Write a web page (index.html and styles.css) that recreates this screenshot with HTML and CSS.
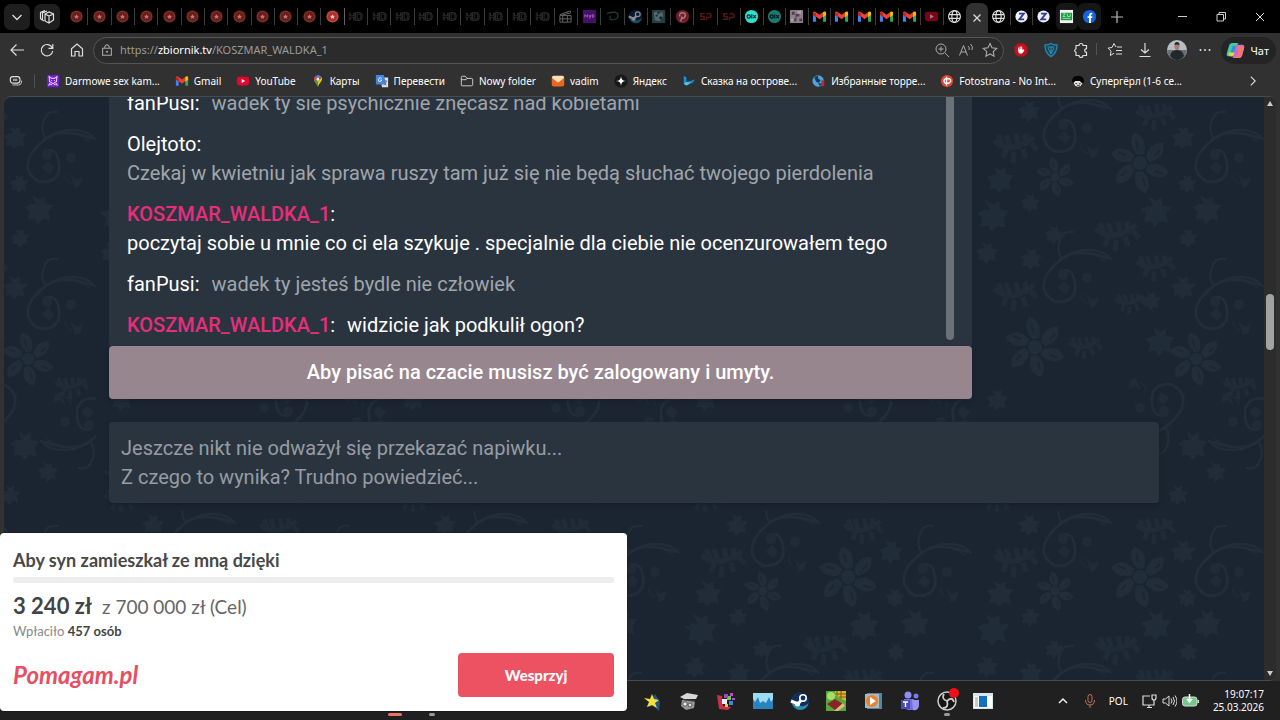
FILE: index.html
```html
<!DOCTYPE html>
<html lang="pl">
<head>
<meta charset="utf-8">
<meta name="viewport" content="width=device-width, initial-scale=1">
<title>KOSZMAR_WALDKA_1</title>
<link rel="stylesheet" href="styles.css">
</head>
<body>
<svg class="defs" aria-hidden="true">
  <symbol id="star-tab" viewBox="0 0 16 16"><circle cx="8" cy="8" r="6.500" fill="#74351a"/><circle cx="8" cy="8" r="4.800" fill="#6f1a22"/><path d="M8 5.500l.8 1.700 1.900.2-1.400 1.200.4 1.900L8 9.500l-1.700 1 .4-1.900-1.400-1.200 1.900-.2z" fill="#b08078"/></symbol>
  <symbol id="hd" viewBox="0 0 16 16"><path d="M2 4v8M6.500 4v8M2 8h4.500M9 4.500h2.500q3 0 3 3.500t-3 3.500H9z" fill="none" stroke="#3b3b3b" stroke-width="2.200"/><path d="M2 4v8M6.500 4v8M2 8h4.500M9 4.500h2.500q3 0 3 3.500t-3 3.500H9z" fill="none" stroke="#0a0a0a"/></symbol>
  <symbol id="gmail" viewBox="0 0 16 16"><path d="M1 4.500V13.500h3.200V8z" fill="#4285f4"/><path d="M15 4.500V13.500h-3.200V8z" fill="#34a853"/><path d="M1 4.500q0-2.500 2.500-1.700L8 6.200l4.500-3.400v4.700L8 11 3 7z" fill="#ea4335"/><path d="M1 4v2.500l3.200 2.400V4z" fill="#c5221f"/><path d="M15 4v2.500l-3.200 2.400V3.500l.7-.7Q15 2 15 4z" fill="#fbbc04"/></symbol>
  <symbol id="youtube" viewBox="0 0 16 16"><rect x="1" y="3" width="14" height="10" rx="2.800" fill="#e5052f"/><path d="M6.500 5.600v4.800l4-2.400z" fill="#fff"/></symbol>
  <symbol id="globe" viewBox="0 0 16 16"><g fill="none" stroke="#ddd" stroke-width="1.200"><circle cx="8" cy="8" r="6.300"/><ellipse cx="8" cy="8" rx="2.800" ry="6.300"/><path d="M2 6h12M2 10h12"/></g></symbol>
  <symbol id="zed" viewBox="0 0 16 16"><circle cx="8" cy="8" r="6.500" fill="#f0f1fa"/><path d="M5.300 5h5.200L5.600 11h5.200" fill="none" stroke="#313f91" stroke-width="1.900"/></symbol>
  <symbol id="five" viewBox="0 0 16 16"><path d="M7 5H3v3h3.500v3H2M9 5h3q2 0 2 2t-2 2H9v3" fill="none" stroke="#53171a" stroke-width="1.600"/></symbol>
  <symbol id="steam" viewBox="0 0 20 20"><circle cx="10" cy="10" r="9" fill="#10305a"/><path d="M1.500 12Q4 18.500 10 19q7 0 8.800-7-5 4-8 3z" fill="#2c8cba"/><path d="M1 10l7 3 5-6" fill="none" stroke="#fff" stroke-width="3"/><circle cx="13" cy="7" r="3.200" fill="#10305a" stroke="#fff" stroke-width="1.600"/><circle cx="7.500" cy="13" r="2.500" fill="#fff"/></symbol>
  <symbol id="olx" viewBox="0 0 16 16"><circle cx="8" cy="8" r="7" fill="#32dfca"/><circle cx="5" cy="8" r="1.700" fill="none" stroke="#012f34" stroke-width="1.400"/><path d="M8.300 5.500v4.700M9.900 6.500l2.800 3.200M12.700 6.500L9.900 9.700" stroke="#012f34" stroke-width="1.300"/></symbol>
  <symbol id="swirl" viewBox="-50 -55 110 90" overflow="visible"><g fill="none" stroke="#212d39" stroke-linecap="round"><path d="M-4-12Q6-15 9-5 14 14 0 18-15 22-21 6-23-8-7-21 8-37 42-25" stroke-width="2.500"/><path d="M-15-13Q2-32 20-33t26 9M-3-24Q-9-32-5-43q3-10 13-8" stroke-width="2"/><path d="M13-30q14-2 27 8M16 12q0 6 6 8"/></g><g fill="#202b37"><circle cx="-2" cy="-8" r="5"/><path d="M-7 5l6-7 6 6-4 7zM22 12l5 5 7-3-3 9-5 2z"/><circle cx="22" cy="-5" r="5"/></g></symbol>
  <symbol id="flower" viewBox="-34 -34 68 68" overflow="visible"><g fill="#212d38"><circle r="7"/><path id="petal" d="M-2-8Q-13-18-6-30 8-26 4-9z"/><use href="#petal" transform="rotate(60)"/><use href="#petal" transform="rotate(120)"/><use href="#petal" transform="rotate(180)"/><use href="#petal" transform="rotate(240)"/><use href="#petal" transform="rotate(300)"/></g><g stroke="#1b2632" stroke-width="2"><path d="M-2-15l-2-8M15-8l5-5M15 8l8 3M3 15l2 8M-14 8l-5 5M-14-8l-8-3"/></g></symbol>
  <symbol id="bloom" viewBox="-18 -18 36 36" overflow="visible"><path d="M-3-6L-7-15 0-11 6-14 6-6 15-5 10 2 12 11 4 9-1 15-5 9-12 10-10 2-15-3-8-6z" fill="#202c37"/></symbol>
  <symbol id="fern" viewBox="-24 -18 48 36" overflow="visible"><path d="M-22-6q15 15 40-4M-13-1l-5-11M-5 3l-5-15M3 2L0-13M10-1l-1-12M-10 3l-3 8M-2 5l-1 11M7 2l3 9M15-4l6 7" fill="none" stroke="#1f2b36" stroke-width="5"/></symbol>
  <symbol id="ext" viewBox="0 0 16 16"><path d="M3 3.500h3a2 2 0 014 0h3.500v3.200a1.800 1.800 0 100 3.600v3.200H10a2 2 0 01-4 0H3v-3.200a1.900 1.900 0 010-3.600z" fill="none" stroke="#ddd" stroke-width="1.200"/></symbol>
</svg>

<header class="browser">
  <div class="tabstrip">
    <div class="tab-tools">
      <button class="square" aria-label="Karty"><svg viewBox="0 0 16 16"><path d="M3.500 6L8 10.500 12.500 6" fill="none" stroke="#ddd" stroke-width="1.300"/></svg></button>
      <button class="square" aria-label="Obszary"><svg viewBox="0 0 16 16"><g fill="none" stroke="#ddd" stroke-width="1.200"><path d="M6 5l4-2 4.500 2v6L10 14l-4-2zM6 5l4 2 4.500-2M10 7v7M8 2L3.500 4v7L5 12M6 1.500L1.500 3.500v6L3 11"/></g></svg></button>
    </div>
    <ul class="tabs tabs-old">
      <li><svg><use href="#star-tab"/></svg></li><li><svg><use href="#star-tab"/></svg></li><li><svg><use href="#star-tab"/></svg></li><li><svg><use href="#star-tab"/></svg></li><li><svg><use href="#star-tab"/></svg></li><li><svg><use href="#star-tab"/></svg></li><li><svg><use href="#star-tab"/></svg></li><li><svg><use href="#star-tab"/></svg></li><li><svg><use href="#star-tab"/></svg></li><li><svg><use href="#star-tab"/></svg></li><li><svg><use href="#star-tab"/></svg></li><li class="bright"><svg><use href="#star-tab"/></svg></li>
      <li><svg><use href="#hd"/></svg></li><li><svg><use href="#hd"/></svg></li><li><svg><use href="#hd"/></svg></li><li><svg><use href="#hd"/></svg></li><li><svg><use href="#hd"/></svg></li><li><svg><use href="#hd"/></svg></li><li><svg><use href="#hd"/></svg></li><li><svg><use href="#hd"/></svg></li><li><svg><use href="#hd"/></svg></li>
      <li><svg viewBox="0 0 16 16"><path d="M2 7h12v7H2zM2 10.500h12M5 14v-7M10 14V7M2 6l11-4 .7 2L3 7M5 5l2 1M9 3.500l2 1" fill="none" stroke="#666"/></svg></li>
      <li><svg viewBox="0 0 16 16"><rect x="1" y="1" width="14" height="14" fill="#46106a"/><path d="M3 9V6l1.500 2L6 6v3M7.500 6.500l1 2 1-2-1.500 4M11 6v3h1q2-1.500 0-3z" fill="none" stroke="#a35ab0"/></svg></li>
      <li><svg viewBox="0 0 16 16"><path d="M2 5q12-4 12 2.500 0 5-9 3.500M5.500 7v4" fill="none" stroke="#173c37" stroke-width="1.400"/></svg></li>
      <li class="dim"><svg><use href="#steam"/></svg></li>
      <li><svg viewBox="0 0 16 16"><path d="M1 1h14v14H1z" fill="#263f43"/><path d="M3 4l3-2 1 4 5-3 1 5-4 5-5-1z" fill="#536b6d"/><path d="M5 6h2v2H5zm4 2h3v3H9z" fill="#182c32"/></svg></li>
      <li><svg viewBox="0 0 16 16"><circle cx="8" cy="8" r="7" fill="#712029"/><path d="M7.500 8L6 13.500M5 8q-.5-4 3-4t3 3-4 3" fill="none" stroke="#a9797d" stroke-width="1.500"/></svg></li>
      <li><svg><use href="#five"/></svg></li><li><svg><use href="#five"/></svg></li>
    </ul>
    <ul class="tabs tabs-mid">
      <li><svg><use href="#olx"/></svg></li><li class="dim"><svg><use href="#olx"/></svg></li>
      <li><svg viewBox="0 0 16 16"><rect x="1" y="1" width="14" height="14" rx="1" fill="#8a828b"/><path d="M3 3h3v3H3zM7 5h4v3H8v5H5v-3h2zM11 10h3v3h-3z" fill="#513e52"/><path d="M9 2h4v3H9zM2 10h3v3H2z" fill="#c598a9"/></svg></li>
      <li><svg><use href="#gmail"/></svg></li><li><svg><use href="#gmail"/></svg></li><li><svg><use href="#gmail"/></svg></li><li><svg><use href="#gmail"/></svg></li><li><svg><use href="#gmail"/></svg></li>
      <li class="dim"><svg><use href="#youtube"/></svg></li><li class="last"><svg><use href="#globe"/></svg></li>
    </ul>
    <button class="active-tab" aria-label="Zamknij kartę"><svg viewBox="0 0 16 16"><path d="M4.500 4.500l7 7M11.500 4.500l-7 7" stroke="#ddd" stroke-width="1.200"/></svg></button>
    <ul class="tabs tabs-new">
      <li><svg><use href="#globe"/></svg></li><li><svg><use href="#zed"/></svg></li><li class="last"><svg><use href="#zed"/></svg></li>
      <li class="raised"><svg viewBox="0 0 16 16"><path d="M1 1h14v14H1z" fill="#f4f5f0"/><path d="M2 4h12v8H2z" fill="#1d9b48"/><path d="M4 5l3 .2L4 8h3M9 5v3h3V5M4 10h8" fill="none" stroke="#9bdaac"/></svg></li>
      <li class="raised"><svg viewBox="0 0 16 16"><circle cx="8" cy="8" r="7" fill="#1264df"/><path d="M8.500 15V7q0-2.500 2.500-2M6 8.700h5" fill="none" stroke="#fff" stroke-width="2"/></svg></li>
    </ul>
    <button class="plain add" aria-label="Nowa karta"><svg viewBox="0 0 16 16"><path d="M8 2v12M2 8h12" stroke="#bbb" stroke-width="1.200"/></svg></button>
    <div class="window-buttons">
      <button class="plain" aria-label="Minimalizuj"><svg viewBox="0 0 16 16"><path d="M4 7.500h9" stroke="#ccc"/></svg></button>
      <button class="plain" aria-label="Przywróć"><svg viewBox="0 0 16 16"><path d="M4 5.500h6.500V12H4zM6 5V3.500h6.500V10H11" fill="none" stroke="#ccc"/></svg></button>
      <button class="plain" aria-label="Zamknij"><svg viewBox="0 0 16 16"><path d="M4 4l8 8M12 4l-8 8" stroke="#ddd"/></svg></button>
    </div>
  </div>

  <div class="toolbar">
    <nav class="nav-buttons">
      <button class="plain" aria-label="Wstecz"><svg viewBox="0 0 16 16"><path d="M15 8H2M7.500 2.500L2 8l5.500 5.500" fill="none" stroke="#ddd" stroke-width="1.200"/></svg></button>
      <button class="plain" aria-label="Odśwież"><svg viewBox="0 0 16 16"><path d="M13.300 6A5.700 5.700 0 1013.700 9M13.800 2v4.300H9.500" fill="none" stroke="#ddd" stroke-width="1.200"/></svg></button>
      <button class="plain" aria-label="Strona główna"><svg viewBox="0 0 16 16"><path d="M2.500 6.800L8 2l5.500 4.800V14H10V9.500H6V14H2.500z" fill="none" stroke="#ddd" stroke-width="1.200"/></svg></button>
    </nav>
    <div class="address">
      <svg viewBox="0 0 16 16"><path d="M3 6h10v8H3zM5.500 6V4q2.500-4 5 0v2" fill="none" stroke="#aaa" stroke-width="1.200"/><circle cx="8" cy="10" r="1.200" fill="#aaa"/></svg>
      <a href="#chat" class="url">https://<b>zbiornik.tv</b>/KOSZMAR_WALDKA_1</a>
      <div class="address-tools">
        <button class="plain" aria-label="Powiększenie"><svg viewBox="0 0 16 16"><circle cx="7" cy="7" r="5" fill="none" stroke="#aaa"/><path d="M11 11l4 4M4.500 7h5M7 4.500v5" stroke="#aaa"/></svg></button>
        <button class="plain" aria-label="Czytaj na głos"><svg viewBox="0 0 16 16"><path d="M1.500 13.500L5.500 3.500l4 10M3 10h5M10 4q2 1.500 1 4M12.500 2q3 2.500 1.500 6" fill="none" stroke="#aaa"/></svg></button>
        <button class="plain" aria-label="Ulubione"><svg viewBox="0 0 16 16"><path d="M8 1.500l2 4.300 4.700.6-3.500 3.200.9 4.700L8 12l-4.100 2.300.9-4.700L1.300 6.400 6 5.800z" fill="none" stroke="#aaa" stroke-width="1.100"/></svg></button>
      </div>
    </div>
    <div class="extensions">
      <button class="plain" aria-label="Blokada reklam"><svg viewBox="0 0 16 16"><path d="M5 1.500h6L14.500 5v6L11 14.500H5L1.500 11V5z" fill="#c80f1e"/><path d="M5.700 8V5.500M7.200 8V4.500M8.700 8V4.500M5.700 8l.5 3h3l1.800-3h-1z" fill="#fff" stroke="#fff"/></svg></button>
      <button class="plain" aria-label="Ochrona"><svg viewBox="0 0 16 16"><path d="M2 3q4 0 6-1.500Q10 3 14 3q0 8-6 11.500Q2 11 2 3z" fill="#173f56" stroke="#2784ad" stroke-width="1.500"/><path d="M4.500 5h7M8 5v6M5 6l3 6 3-6" fill="none" stroke="#3395bc"/></svg></button>
      <button class="plain" aria-label="Rozszerzenia"><svg><use href="#ext"/></svg></button>
      <button class="plain split" aria-label="Lista ulubionych"><svg viewBox="0 0 16 16"><path d="M9 5L7 1.500 5 5.500l-4 .6 3 3-.7 4.400L7 11.300M10 5h5M9 8.500h6M9 12h6" fill="none" stroke="#ddd"/></svg></button>
      <button class="plain" aria-label="Pobrane"><svg viewBox="0 0 16 16"><path d="M8 1v10M4 7.500L8 11l4-3.500M2.500 14.500h11" fill="none" stroke="#ddd" stroke-width="1.200"/></svg></button>
      <button class="plain" aria-label="Profil"><svg class="avatar" viewBox="0 0 20 20"><circle cx="10" cy="10" r="10" fill="#b7bec2"/><path d="M0 10h20q-1 9-10 10Q1 19 0 10z" fill="#687176"/><path d="M3 16q1-6 7-6t7 6q-3 4-7 4t-7-4z" fill="#21272d"/><ellipse cx="10" cy="6.500" rx="2.500" ry="3.500" fill="#a57f70"/><path d="M7.500 5q0-3 2.500-3t2.500 3q-2-1-5 0z" fill="#272624"/></svg></button>
      <button class="plain" aria-label="Więcej"><svg viewBox="0 0 16 16"><g fill="#ddd"><circle cx="3.500" cy="8" r="1"/><circle cx="8" cy="8" r="1"/><circle cx="12.500" cy="8" r="1"/></g></svg></button>
    </div>
    <button class="copilot"><svg viewBox="0 0 20 20"><path d="M7 2h6l-3 12q-.5 2-3 2H3q-3 0-2-3l2-8q1-3 4-3z" fill="#2d91d3"/><path d="M4 4q1-2 3-2h5l-1 3H7L4 16H3q-3 0-2-3z" fill="#43cba0"/><path d="M13 18H7l3-12q.5-2 3-2h4q3 0 2 3l-2 8q-1 3-4 3z" fill="#c568d9"/><path d="M12 5h5q3 0 2 3l-2 7q-1 3-4 3H9l1-3h3z" fill="#ee7774"/><path d="M3 12h6l-1 3q-1 2-3 1-3-1-2-4z" fill="#e3d541"/></svg>Чат</button>
  </div>

  <nav class="bookmarks">
    <a href="#apps" class="apps" aria-label="Karty"><svg viewBox="0 0 16 16"><rect x="1.500" y="3" width="11" height="7.500" rx="3" fill="none" stroke="#ddd" stroke-width="1.300"/><path d="M4.500 5.500h5v2.500h-5z" fill="#999"/><path d="M4 12.500h7q3.500 0 3.500-5" fill="none" stroke="#ddd"/></svg></a>
    <a href="#b1"><svg viewBox="0 0 16 16"><rect x="1" y="1" width="14" height="14" rx="2" fill="#6e1cd2"/><path d="M4 7.500L3.500 3l3 2h3l3-2-.5 4.500v1L8 11 4 8.500zM3 13.500l1-2.500 3 1.500M13 13.500L12 11l-3 1.500M6 7.500h1M9 7.500h1" fill="none" stroke="#e6cfff" stroke-width="1.200"/></svg>Darmowe sex kam...</a>
    <a href="#b2"><svg><use href="#gmail"/></svg>Gmail</a>
    <a href="#b3"><svg><use href="#youtube"/></svg>YouTube</a>
    <a href="#b4"><svg viewBox="0 0 16 16"><path d="M8 15Q6 11 4.500 9 3 6 4.500 3.500L8 6l3.500 2.500Q9 11 8 15z" fill="#34a853"/><path d="M4.500 3.500Q8-1 11.500 3L8 6 3.700 8Q3 5 4.500 3.500z" fill="#4285f4"/><path d="M11 2.500q3 3 .5 6L8 13V9l3-4z" fill="#fbbc04"/><path d="M3.500 6Q4 3 6 2l2 4-4 3z" fill="#ea4335"/><circle cx="8" cy="6" r="1.600" fill="#fff"/></svg>Карты</a>
    <a href="#b5"><svg viewBox="0 0 16 16"><path d="M6 4h9v11H8z" fill="#dce2e9"/><path d="M1 1h9l3 11H2q-1 0-1-1z" fill="#4486e4"/><path d="M7.500 5Q6 3.500 4.500 5t0 3.500q2 1 3.300-1.500H6" fill="none" stroke="#fff"/><path d="M9 8h5M11.500 7v1M13 8q-1 4-3 5M10 10l3 3" fill="none" stroke="#697789"/></svg>Перевести</a>
    <a href="#b6"><svg viewBox="0 0 16 16"><path d="M1.500 13V4q0-1.500 1.500-1.500h3L8 5h5q1.500 0 1.500 1.500V12q0 1.500-1.500 1.500H2zM1.500 6.500H7L8 5" fill="none" stroke="#ddd"/></svg>Nowy folder</a>
    <a href="#b7"><svg viewBox="0 0 16 16"><rect x="1" y="3" width="14" height="11" rx="2" fill="#f59624"/><path d="M1 4l7 6 7-6q0-2-2-2H3Q1 2 1 4z" fill="#f5dfbd"/><path d="M1 5v7q0 2 2 2h10q2 0 2-2V5L8 10z" fill="#ee6420"/></svg>vadim</a>
    <a href="#b8"><svg viewBox="0 0 16 16"><circle cx="8" cy="8" r="7.500" fill="#171717"/><path d="M8 2q0 6 6 6-6 0-6 6 0-6-6-6 6 0 6-6z" fill="#fff"/></svg>Яндекс</a>
    <a href="#b9"><svg viewBox="0 0 16 16"><path d="M2 2l3 2v5l5-1 5-2-3 4-7 3-3-2z" fill="#1392de"/><path d="M5 9l5 1-5 3-3-2z" fill="#55c7ee"/></svg>Сказка на острове...</a>
    <a href="#b10"><svg viewBox="0 0 16 16"><circle cx="7" cy="8" r="6.500" fill="#4fa3db"/><path d="M3 3l4-1v3l3 2-2 3-3-1-2-4zM7 10l4 1-2 3z" fill="#16395b"/><path d="M11 7h3v7h-4z" fill="#ba2938"/></svg>Избранные торре...</a>
    <a href="#b11"><svg viewBox="0 0 16 16"><circle cx="8" cy="8" r="7" fill="#e84330"/><path d="M7.500 3v10M7.500 5.500H6q-3 2 0 5h4q4-2 1-5H7" fill="none" stroke="#fff" stroke-width="1.600"/></svg>Fotostrana - No Int...</a>
    <a href="#b12"><svg viewBox="0 0 16 16"><ellipse cx="8" cy="9" rx="5" ry="5.500" fill="#e7e2de"/><path d="M1 9q0-7 7-7t7 7v1H12l-2-2H5l-2 2z" fill="#050505"/><path d="M5 11h2M9 11h2M7 13h3" stroke="#222"/></svg>Супергёрл (1-6 се...</a>
    <button class="plain more" aria-label="Więcej zakładek"><svg viewBox="0 0 16 16"><path d="M5.500 3L10.500 8l-5 5" fill="none" stroke="#ddd" stroke-width="1.300"/></svg></button>
  </nav>
</header>

<div class="frame">
  <svg class="wallpaper" aria-hidden="true" width="100%" height="100%">
    <defs><pattern id="floral" x="92" y="0" width="292" height="414" patternUnits="userSpaceOnUse">
      <g><use href="#swirl" x="43" y="-19" width="110" height="90"/><use href="#swirl" x="43" y="131" width="110" height="90"/><use href="#swirl" x="195" y="11" width="110" height="90"/><use href="#swirl" x="-97" y="11" width="110" height="90"/><use href="#swirl" x="195" y="158" width="110" height="90"/><use href="#swirl" x="-97" y="158" width="110" height="90"/></g>
      <g transform="translate(190 306) scale(-1 -1)"><use href="#swirl" x="-50" y="-55" width="110" height="90"/></g>
      <g transform="translate(55 350) scale(-1 -1)"><use href="#swirl" x="-50" y="-55" width="110" height="90"/></g>
      <g transform="translate(283 320) scale(-1 -1)"><use href="#swirl" x="-50" y="-55" width="110" height="90"/></g>
      <use href="#flower" x="134" y="32" width="68" height="68"/><use href="#flower" x="29" y="216" width="68" height="68"/><use href="#flower" x="194" y="232" width="60" height="60"/><use href="#flower" x="61" y="58" width="44" height="44"/>
      <g><use href="#bloom" x="12" y="67" width="32" height="32"/><use href="#bloom" x="2" y="100" width="38" height="38"/><use href="#bloom" x="166" y="97" width="36" height="36"/><use href="#bloom" x="218" y="96" width="34" height="34"/><use href="#bloom" x="197" y="27" width="28" height="28"/><use href="#bloom" x="44" y="1" width="26" height="26"/><use href="#bloom" x="204" y="76" width="22" height="22"/><use href="#bloom" x="47" y="95" width="22" height="22"/><use href="#bloom" x="2" y="143" width="26" height="26"/><use href="#bloom" x="46" y="149" width="26" height="26"/><use href="#bloom" x="197" y="177" width="28" height="28"/><use href="#bloom" x="171" y="228" width="34" height="34"/><use href="#bloom" x="168" y="193" width="22" height="22"/><use href="#bloom" x="204" y="332" width="34" height="34"/><use href="#bloom" x="232" y="363" width="24" height="24"/><use href="#bloom" x="194" y="386" width="24" height="24"/><use href="#bloom" x="12" y="290" width="26" height="26"/><use href="#bloom" x="71" y="127" width="22" height="22"/><use href="#bloom" x="205" y="130" width="22" height="22"/></g>
      <g><use href="#fern" x="20" y="32" width="48" height="36"/><use href="#fern" x="162" y="3" width="44" height="32"/><use href="#fern" x="122" y="120" width="48" height="36"/><use href="#fern" x="20" y="180" width="48" height="36"/><use href="#fern" x="162" y="154" width="44" height="32"/><use href="#fern" x="96" y="232" width="36" height="36"/><use href="#fern" x="250" y="272" width="36" height="36"/><use href="#fern" x="142" y="188" width="34" height="36"/><use href="#fern" x="5" y="388" width="44" height="30"/></g>
    </pattern></defs>
    <rect width="100%" height="100%" fill="url(#floral)"/>
  </svg>
  <main class="content">
    <section class="chat" id="chat">
      <div class="chat-body">
        <div class="messages">
          <p><span class="who">fanPusi:</span> <span class="muted">wadek ty sie psychicznie znęcasz nad kobietami</span></p>
          <p><span class="who">Olejtoto:</span><br><span class="muted">Czekaj w kwietniu jak sprawa ruszy tam już się nie będą słuchać twojego pierdolenia</span></p>
          <p><span class="who"><em>KOSZMAR_WALDKA_1</em>:</span><br>poczytaj sobie u mnie co ci ela szykuje . specjalnie dla ciebie nie ocenzurowałem tego</p>
          <p><span class="who">fanPusi:</span> <span class="muted">wadek ty jesteś bydle nie człowiek</span></p>
          <p><span class="who"><em>KOSZMAR_WALDKA_1</em>:</span> widzicie jak podkulił ogon?</p>
        </div>
        <div class="chat-scroll"></div>
      </div>
      <button class="login">Aby pisać na czacie musisz być zalogowany i umyty.</button>
    </section>
    <section class="tips">Jeszcze nikt nie odważył się przekazać napiwku...<br>Z czego to wynika? Trudno powiedzieć...</section>
  </main>
  <div class="scrollbar"><span class="arrow up"></span><span class="track-before"></span><span class="thumb"></span><span class="track-after"></span><span class="arrow down"></span></div>
</div>

<footer class="taskbar">
  <ul class="task-apps">
    <li class="open current"></li><li class="open"></li><li></li><li></li><li></li><li></li><li></li>
    <li><svg viewBox="0 0 20 20"><path d="M12 3l5 8-1 9-6-5-7 1 4-6z" fill="#20538a"/><path d="M9 3l2 5 5 1-4 3 2 5-5-3-5 2 2-5-5-4 6 1z" fill="#f4df38"/></svg></li>
    <li><svg viewBox="0 0 20 20"><path d="M1 6l7-4 11 2-2 4H5z" fill="#d7d7d5"/><path d="M3 9l13 1-1 7-8 2-5-4z" fill="#999"/><path d="M4 8l12 1v2L4 9z" fill="#3d3d3d"/><circle cx="6" cy="13" r="2.200" fill="#eee" stroke="#555"/><circle cx="11" cy="14" r="2" fill="#ddd" stroke="#555"/></svg></li>
    <li><svg viewBox="0 0 20 20"><path d="M1 4l5 1 1 10 8 1-3 3-9-1z" fill="#c93148"/><path d="M6 8h5v5H6z" fill="#e9edf2"/><path d="M11 5h4v4h-4z" fill="#6ac65b"/><path d="M8 3h4v4H8z" fill="#9b4dae"/><path d="M13 10h4v4h-4z" fill="#4188db"/><path d="M14 2h3v3h-3zM16 7h3v2h-3z" fill="#c04bd0"/><path d="M9 13h3v3H9z" fill="#e9c744"/></svg></li>
    <li><svg viewBox="0 0 20 20"><path d="M0 2h20v16H0z" fill="#2a83bd"/><path d="M0 2h20v6l-2 3-2-5-3 6-3-2-3 2-2-6-3 5-2-3z" fill="#9bdcf2"/></svg></li>
    <li><svg><use href="#steam"/></svg></li>
    <li><svg viewBox="0 0 20 20"><path d="M0 0h20v20H0z" fill="#55a839"/><path d="M9 0h11v10L9 5z" fill="#d9b52d"/><path d="M11 0v6M15 0v8M9 3h11M13 6h7" stroke="#796116"/><circle cx="5" cy="5" r="4" fill="#a5df69"/><path d="M1 13l8-5 8 5-8 6z" fill="#8b2428"/><path d="M17 12l2 3-7 5H8z" fill="#e1b683"/></svg></li>
    <li><svg viewBox="0 0 20 20"><path d="M4 2h15v16H4z" fill="#58869d"/><path d="M2 3h14v14H2z" fill="#a2bbc5"/><circle cx="9" cy="10" r="6" fill="#e9812d"/><path d="M7 6v8l6-4z" fill="#fff"/></svg></li>
    <li><svg viewBox="0 0 20 20"><circle cx="8" cy="4" r="3.500" fill="#8c8ff0"/><circle cx="16" cy="5" r="2.500" fill="#777bea"/><path d="M4 8h10v11H8q-4-1-4-5z" fill="#6f70df"/><path d="M12 9h7v6q-1 5-6 4z" fill="#9694ee"/><path d="M1 9h9v9H1z" fill="#4b4bb5"/><path d="M3 11h5M5.500 11v5" stroke="#fff" stroke-width="1.400"/></svg></li>
    <li class="open"><svg viewBox="0 0 20 20"><circle cx="10" cy="10" r="9" fill="#151515" stroke="#ccc" stroke-width="1.500"/><path d="M10 10Q4 8 7 3M10 10q5-5 7 1M10 10q2 7-4 7" fill="none" stroke="#ccc" stroke-width="1.800"/><circle cx="17" cy="2" r="5" fill="#ef1016"/></svg></li>
    <li><svg viewBox="0 0 20 20"><path d="M0 2h20v16H0z" fill="#d8e6ee"/><path d="M1 5h18v12H1z" fill="#fff"/><path d="M6 5h8v11H6z" fill="#1270bd"/><path d="M2 6h3v10H2z" fill="#c3cbd1"/></svg></li>
  </ul>
  <div class="tray">
    <svg viewBox="0 0 16 16"><path d="M4 10l4-4 4 4" fill="none" stroke="#eee" stroke-width="1.500"/></svg>
    <svg viewBox="0 0 16 16"><rect x="6" y="1.500" width="4" height="8" rx="2" fill="none" stroke="#bd7358"/><path d="M3.500 7q0 5 4.500 5t4.500-5M8 12v3" fill="none" stroke="#bd7358"/></svg>
    <span>POL</span>
    <div class="status">
      <svg viewBox="0 0 16 16"><path d="M9 3H2v9h11V8M6 14.500h5M8 12v2M11 2h4v3q0 2-2 2t-2-2zM13 7v4" fill="none" stroke="#ddd" stroke-width="1.200"/></svg>
      <svg viewBox="0 0 16 16"><path d="M2 6h2.500L8 3v10L4.500 10H2zM10 5.500q2 2.500 0 5M12 4q3 4 0 8M14 2.500q4 5.500 0 11" fill="none" stroke="#ddd"/></svg>
      <svg viewBox="0 0 18 16"><rect x="1" y="4" width="14.500" height="9" rx="2.500" fill="#74c889" stroke="#ddd"/><path d="M16.800 7v3" stroke="#ddd" stroke-width="1.500"/><path d="M8 1v7M5.500 6L8 9l2.500-3" fill="#fff" stroke="#fff" stroke-width="1.500"/></svg>
    </div>
    <time>19:07:17<br>25.03.2026</time>
  </div>
</footer>

<aside class="donation">
  <h2>Aby syn zamieszkał ze mną dzięki</h2>
  <div class="progress"></div>
  <p class="amount"><strong>3 240 zł</strong> z 700 000 zł (Cel)</p>
  <p class="donors">Wpłaciło <b>457 osób</b></p>
  <div class="donation-foot"><span class="brand">Pomagam.pl</span><button class="support">Wesprzyj</button></div>
</aside>
</body>
</html>
```

FILE: styles.css
```css
* { box-sizing: border-box; }
body {
  margin: 0;
  min-height: 100vh;
  display: flex;
  flex-direction: column;
  background: #313131;
  color: #fff;
  font-family: "Noto Sans", sans-serif;
  overflow: hidden;
}
button { font: inherit; color: inherit; border: 0; padding: 0; background: none; }
a { color: inherit; text-decoration: none; }
ul { margin: 0; padding: 0; list-style: none; }
p, h2 { margin: 0; }
svg { display: block; flex: none; width: 16px; height: 16px; }
.defs { position: absolute; width: 0; height: 0; }
.plain { display: grid; place-items: center; }

/* Tab strip */
.tabstrip { display: flex; align-items: center; height: 33px; background: #000; }
.tab-tools { display: flex; gap: 4px; padding: 0 5px 0 4px; }
.square { display: grid; place-items: center; width: 26px; height: 26px; border-radius: 7px; background: #1e1e1e; }
.tabs { display: flex; align-items: center; }
.tabs li { flex: 1; display: grid; place-items: center; height: 17px; border-right: 1px solid #3d3d3d; }
.tabs svg { width: 15px; height: 15px; }
.tabs .last { border-color: transparent; }
.tabs .dim svg { opacity: .55; }
.tabs .bright { filter: brightness(1.6); }
.tabs .raised { height: 27px; background: #161616; border-color: #161616; border-radius: 6px; }
.tabs-old { flex: 676; }
.tabs-mid { flex: 225; }
.tabs-new { flex: 113; }
.active-tab { display: grid; place-items: center; align-self: flex-end; width: 22px; height: 30px; background: #313131; border-radius: 7px 7px 0 0; }
.add { width: 32px; }
.window-buttons { display: flex; gap: 23px; padding: 0 12px 0 41px; }

/* Toolbar */
.toolbar { display: flex; align-items: center; height: 34px; padding: 0 4px 0 9px; }
.nav-buttons { display: flex; gap: 14px; margin-right: 8px; }
.address { flex: 1; display: flex; align-items: center; height: 27px; padding: 0 5px; gap: 5px; border: 1px solid #555; border-radius: 14px; background: #2b2b2b; }
.address > svg { width: 14px; height: 14px; margin: 0 1px; }
.url { flex: 1; font-size: 11px; line-height: 20px; color: #9b9b9b; }
.url b { font-weight: 400; color: #fff; }
.address-tools { display: flex; gap: 8px; }
.extensions { display: flex; gap: 14px; margin: 0 8px 0 9px; }
.extensions .plain { width: 16px; }
.extensions .split { position: relative; margin-left: 4px; }
.split::before { content: ""; position: absolute; left: -11px; top: 3px; width: 1px; height: 12px; background: #555; }
.avatar { width: 20px; height: 20px; }
.copilot { display: flex; align-items: center; gap: 5px; height: 27px; padding: 0 7px 0 5px; border-radius: 14px; background: #242424; font-size: 11px; }
.copilot svg { width: 19px; height: 19px; }

/* Bookmarks */
.bookmarks { display: flex; align-items: center; gap: 15px; height: 29px; padding: 0 20px 2px 9px; font-size: 10px; line-height: 16px; }
.bookmarks a { display: flex; align-items: center; gap: 5px; white-space: nowrap; }
.bookmarks svg { width: 14px; height: 14px; }
.bookmarks .apps { margin-right: -4px; padding-right: 11px; border-right: 1px solid #505050; }
.bookmarks .more { margin-left: auto; }

/* Page */
.frame { position: relative; flex: 1; display: flex; margin: 0 4px; border: 1px solid #454c50; border-width: 1px 0; border-radius: 7px; background: #1b2531; overflow: hidden; }
.wallpaper { position: absolute; inset: 0; width: 100%; height: 100%; }
.content { position: relative; flex: 1; padding: 0 105px; font: 20px/29px Roboto, sans-serif; }
.chat { width: 82.2%; }
.chat-body { display: flex; height: 249px; padding: 0 18px 6px; background: #2a343f; }
.messages { flex: 1; display: flex; flex-direction: column; justify-content: flex-end; gap: 12px; white-space: nowrap; }
.who { margin-right: 7px; }
.who em { font-style: normal; font-weight: 500; color: #e62e7b; }
.muted { color: #a0a5ac; }
.chat-scroll { width: 8px; border-radius: 0 0 4px 4px; background: #6a7178; }
.login { width: 100%; height: 53px; border-radius: 4px; background: #98868f; font-weight: 500; box-shadow: 0 2px 4px #10182180; }
.tips { margin-top: 23px; padding: 12px 12px 11px; border-radius: 4px; background: #2a343f; color: #969ca3; box-shadow: 0 2px 4px #10182180; }
.scrollbar { position: relative; width: 12px; display: flex; flex-direction: column; align-items: center; padding: 4px 0; background: #2b2c2b; }
.arrow { border: 3px solid transparent; }
.up { border-top: 0; border-bottom: 5px solid #ccc; }
.down { border-bottom: 0; border-top: 5px solid #ccc; }
.track-before { flex: 186; }
.thumb { flex: 55; width: 8px; border-radius: 4px; background: #a0a3a1; }
.track-after { flex: 318; }

/* Taskbar */
.taskbar { display: flex; align-items: center; height: 39px; padding: 0 16px 0 377px; background: #202020; font-size: 10px; line-height: 14px; }
.task-apps { flex: 1; display: flex; }
.task-apps li { position: relative; flex: 1; display: grid; place-items: center; height: 39px; }
.task-apps svg { width: 20px; height: 20px; overflow: visible; }
.open::after { content: ""; position: absolute; left: 50%; bottom: 4px; width: 6px; height: 3px; margin-left: -3px; border-radius: 2px; background: #999; }
.current::after { width: 14px; margin-left: -7px; background: #e57468; }
.tray { display: flex; align-items: center; gap: 13px; padding-left: 53px; }
.tray > svg { margin-right: -2px; }
.status { display: flex; gap: 4px; }
.status svg:last-child { width: 19px; }
time { text-align: right; line-height: 13px; }

/* Donation card */
.donation { position: absolute; left: 0; bottom: 9px; width: 49%; padding: 14px 13px; border-radius: 4px; background: #fff; color: #484848; font-family: Lato, sans-serif; box-shadow: 0 0 2px #0008; }
.donation h2 { font-size: 18px; line-height: 26px; font-weight: 700; }
.progress { height: 6px; margin: 4px 0 10px; border-radius: 2px; background: #eee; }
.amount { font-size: 19px; line-height: 26px; color: #666; }
.amount strong { margin-right: 5px; font-size: 22px; color: #444; }
.donors { font-size: 13px; line-height: 22px; color: #888; }
.donors b { color: #444; }
.donation-foot { display: flex; align-items: center; justify-content: space-between; margin-top: 11px; }
.brand { font-size: 24px; line-height: 44px; font-style: italic; font-weight: 700; color: #e64f63; }
.support { width: 26%; height: 44px; border-radius: 4px; background: #ed5262; color: #fff; font-size: 15px; font-weight: 900; }
```
